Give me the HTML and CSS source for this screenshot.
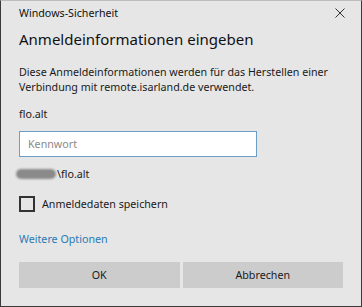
FILE: index.html
```html
<!DOCTYPE html>
<html lang="de">
<head>
    <meta charset="UTF-8">
    <title>Windows-Sicherheit</title>
    <link rel="stylesheet" href="styles.css">
</head>
<body>
    <div class="dialog">
        <div class="dialog-top">
            <span class="caption">Windows-Sicherheit</span>
            <span class="close-btn">
                <svg viewBox="0 0 10 10" width="10" height="10" stroke="#333" stroke-width="1">
                    <path d="M0.5 0.5L9.5 9.5M9.5 0.5L0.5 9.5"/>
                </svg>
            </span>
        </div>
        <h1 class="title">Anmeldeinformationen eingeben</h1>

        <p class="desc">Diese Anmeldeinformationen werden für das Herstellen einer Verbindung mit remote.isarland.de verwendet.</p>

        <div class="user">flo.alt</div>

        <input type="password" class="pw-input" placeholder="Kennwort">

        <div class="domain-user"><span class="blurred"></span>\flo.alt</div>

        <label class="remember">
            <span class="checkbox"></span>
            Anmeldedaten speichern
        </label>

        <a class="more-link" href="#">Weitere Optionen</a>

        <div class="buttons">
            <button class="btn">OK</button>
            <button class="btn">Abbrechen</button>
        </div>
    </div>
</body>
</html>
```

FILE: styles.css
```css
* {
    margin: 0;
    padding: 0;
    box-sizing: border-box;
}

body {
    width: 362px;
    height: 307px;
    background: #e6e6e6;
    font-family: "Noto Sans", "Open Sans", sans-serif;
    font-size: 10.7px;
    color: #1a1a1a;
}

.dialog {
    width: 362px;
    height: 307px;
    background: #e6e6e6;
    border: 1px solid #3a3a3a;
    border-top-color: #bdbdbd;
    padding: 0 18px;
    display: flex;
    flex-direction: column;
}

.dialog-top {
    display: flex;
    justify-content: space-between;
    align-items: center;
    height: 24px;
}

.caption {
    font-size: 10.7px;
    color: #111;
}

.close-btn {
    display: flex;
    margin-right: -2px;
}

.title {
    font-size: 15px;
    font-weight: 400;
    color: #111;
    margin-top: 3px;
    line-height: 22px;
}

.desc {
    line-height: 15px;
    margin-top: 15px;
}

.user {
    margin-top: 11px;
    line-height: 16px;
}

.pw-input {
    width: 238px;
    height: 26px;
    margin-top: 9px;
    border: 1px solid #6d9fc6;
    background: #fff;
    padding: 0 8px;
    font-family: inherit;
    font-size: 10.7px;
    outline: none;
}

.pw-input::placeholder {
    color: #8a8a8a;
}

.domain-user {
    display: flex;
    align-items: center;
    margin-top: 9px;
    margin-left: -3px;
    line-height: 16px;
}

.blurred {
    display: inline-block;
    width: 40px;
    height: 10px;
    background: #8a8a8a;
    border-radius: 5px;
    filter: blur(1px);
    margin-right: 1px;
}

.remember {
    display: flex;
    align-items: center;
    gap: 7px;
    margin-top: 14px;
}

.checkbox {
    width: 16px;
    height: 16px;
    border: 2px solid #333;
    background: #e6e6e6;
}

.more-link {
    color: #2a7ab5;
    text-decoration: none;
    margin-top: 19px;
    line-height: 16px;
}

.buttons {
    display: flex;
    gap: 3px;
    margin-top: 15px;
}

.btn {
    width: 161px;
    height: 26px;
    background: #cccccc;
    border: none;
    font-family: inherit;
    font-size: 10.7px;
    color: #1a1a1a;
}
```
